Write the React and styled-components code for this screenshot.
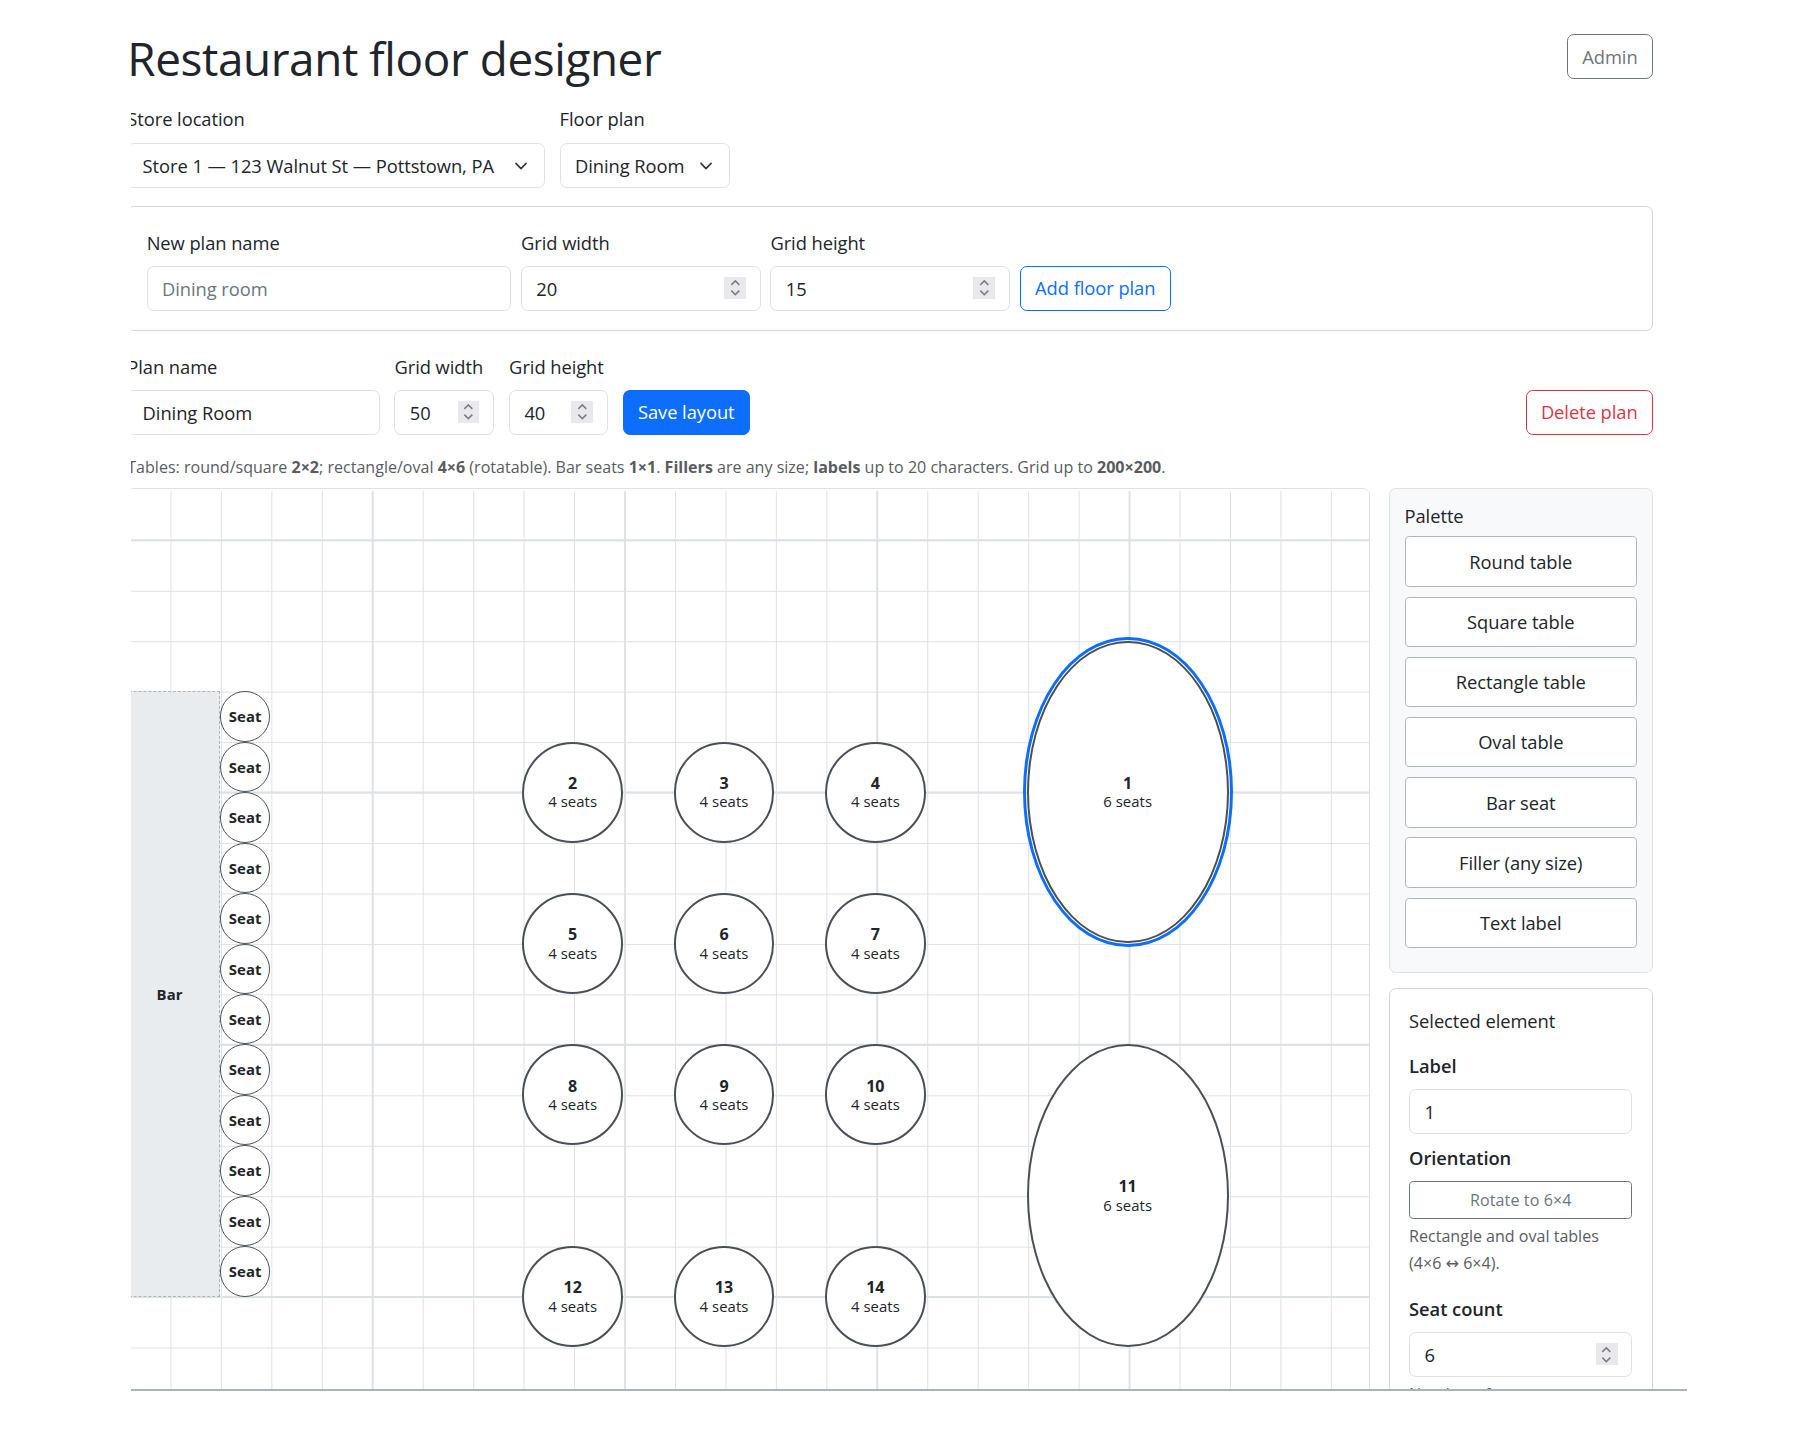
import React from 'react';
import styled, { createGlobalStyle } from 'styled-components';

const CELL = 44;

const GlobalStyle = createGlobalStyle`
  html, body {
    margin: 0;
    padding: 0;
    background: #fff;
  }
  body {
    font-family: "Open Sans", "Noto Sans", "Liberation Sans", sans-serif;
    font-size: 16px;
    line-height: 24px;
    color: #212529;
    letter-spacing: -0.05px;
  }
  * {
    box-sizing: border-box;
  }
`;

const Page = styled.div`
  zoom: 1.14668;
  width: 1568px;
  height: 1256px;
  padding-left: 114px;
  overflow: hidden;
`;

const Frame = styled.div`
  width: 1357px;
  height: 1213px;
  overflow: hidden;
  border-bottom: 2px solid #a9b5ba;
`;

const Inner = styled.div`
  width: 1330.5px;
  margin-left: -3px;
  padding-top: 30px;
`;

const Header = styled.div`
  display: flex;
  justify-content: space-between;
  align-items: flex-start;
`;

const Title = styled.h1`
  margin: -3px 0 0;
  font-size: 40px;
  line-height: 48px;
  font-weight: 400;
  letter-spacing: -0.35px;
`;

const Row = styled.div`
  display: flex;
  align-items: flex-end;
  gap: ${(p) => p.$gap || 13}px;
  margin-top: ${(p) => p.$top || 0}px;
`;

const Field = styled.div`
  width: ${(p) => p.$width}px;
  flex: none;
`;

const Label = styled.label`
  display: block;
  margin-bottom: ${(p) => p.$gap || 8}px;
`;

const Input = styled.input`
  display: block;
  width: 100%;
  height: 39px;
  padding: 0 12.5px;
  border: 1px solid #dee2e6;
  border-radius: 6px;
  background: #fff;
  color: #212529;
  font: inherit;
  letter-spacing: inherit;
  outline: none;

  &::placeholder {
    color: #6c757d;
    opacity: 1;
  }
`;

const Select = styled.select`
  display: block;
  width: 100%;
  height: 39px;
  padding: 0 36px 0 12.5px;
  border: 1px solid #dee2e6;
  border-radius: 6px;
  background: #fff url("data:image/svg+xml,%3csvg xmlns='http://www.w3.org/2000/svg' viewBox='0 0 16 16'%3e%3cpath fill='none' stroke='%23343a40' stroke-linecap='round' stroke-linejoin='round' stroke-width='2' d='m2 5 6 6 6-6'/%3e%3c/svg%3e") no-repeat right 12px center / 16px 12px;
  color: #212529;
  font: inherit;
  letter-spacing: inherit;
  appearance: none;
  outline: none;
`;

const NumberWrap = styled.div`
  position: relative;
`;

const Spinner = styled.span`
  position: absolute;
  top: 10px;
  right: 13px;
  width: 19px;
  height: 19px;
  background: #e9e9ed;
  display: flex;
  align-items: center;
  justify-content: center;
`;

const Button = styled.button`
  flex: none;
  height: 39px;
  padding: 0 12.5px;
  border: 1px solid ${(p) => p.$color};
  border-radius: 6px;
  background: ${(p) => (p.$solid ? p.$color : '#fff')};
  color: ${(p) => (p.$solid ? '#fff' : p.$color)};
  font: inherit;
  letter-spacing: inherit;
  white-space: nowrap;
`;

const NewPlanCard = styled.div`
  margin-top: 16px;
  height: 109px;
  padding: 19px 16px 0;
  border: 1px solid #d3d6d9;
  border-radius: 6px;
`;

const Push = styled.div`
  margin-left: auto;
`;

const Hint = styled.p`
  margin: 18px 0 0;
  font-size: 14px;
  line-height: 21px;
  letter-spacing: 0;
  color: #595c5f;

  strong {
    font-weight: 700;
  }
`;

const Workspace = styled.div`
  display: flex;
  align-items: flex-start;
  gap: 16.5px;
  margin-top: 8px;
`;

const Canvas = styled.div`
  position: relative;
  flex: none;
  width: 1083.5px;
  height: 800px;
  overflow: hidden;
  border: 1px solid #dee2e6;
  border-radius: 6px;
`;

const Plane = styled.div`
  position: absolute;
  left: -7px;
  top: 1px;
  width: 2200px;
  height: 1760px;
  background-color: #fff;
  background-image:
    linear-gradient(to right, #dee2e6 2px, transparent 2px),
    linear-gradient(to bottom, #dee2e6 2px, transparent 2px),
    linear-gradient(to right, #dee2e6 1px, transparent 1px),
    linear-gradient(to bottom, #dee2e6 1px, transparent 1px);
  background-size: 220px 220px, 220px 220px, 44px 44px, 44px 44px;
  background-position: -0.5px 0, 0 42px, 0 0, 0 -1px;
`;

const Piece = styled.div`
  position: absolute;
  left: ${(p) => p.$x * CELL - 1}px;
  top: ${(p) => p.$y * CELL - 1}px;
  width: ${(p) => p.$w * CELL}px;
  height: ${(p) => p.$h * CELL}px;
  display: flex;
  flex-direction: column;
  align-items: center;
  justify-content: center;
  font-size: 13px;
  line-height: 16px;
  letter-spacing: 0.05px;
`;

const Table = styled(Piece)`
  margin-left: -0.5px;
  border: 2px solid #495057;
  border-radius: 50%;
  background: #fff;
  outline: ${(p) => (p.$selected ? '3px solid #0d6efd' : 'none')};
  outline-offset: 1px;
`;

const TableNumber = styled.b`
  font-weight: 700;
  font-size: 14px;
`;

const Seat = styled(Piece)`
  border: 1px solid #495057;
  border-radius: 50%;
  background: #fff;
  font-weight: 700;
  letter-spacing: 0.1px;
  z-index: 1;
`;

const Bar = styled(Piece)`
  border: 1px dashed #adb5bd;
  background: #e9ecef;
  font-weight: 700;
`;

const Sidebar = styled.div`
  flex: none;
  width: 230.5px;
  display: flex;
  flex-direction: column;
  gap: 13px;
`;

const Palette = styled.div`
  height: 423px;
  padding: 11px 13px;
  border: 1px solid #dee2e6;
  border-radius: 6px;
  background: #f8f9fa;
`;

const PaletteList = styled.div`
  display: flex;
  flex-direction: column;
  gap: 8.5px;
  margin-top: 6px;
`;

const PaletteButton = styled.button`
  height: 44px;
  border: 1px solid #adb5bd;
  border-radius: 4px;
  background: #fff;
  color: #212529;
  font: inherit;
  letter-spacing: inherit;
`;

const Inspector = styled.div`
  padding: 15px 17px;
  border: 1px solid #d3d6d9;
  border-radius: 6px;
  background: #fff;
`;

const InspectorTitle = styled.div`
  margin-bottom: 16px;
`;

const InspectorLabel = styled.label`
  display: block;
  margin-bottom: 8px;
  font-weight: 600;
`;

const InspectorGroup = styled.div`
  margin-bottom: ${(p) => p.$gap}px;
`;

const RotateButton = styled.button`
  display: block;
  width: 100%;
  height: 33px;
  padding: 2px 0 0;
  border: 1px solid #6c757d;
  border-radius: 4px;
  background: #fff;
  color: #6c757d;
  font: inherit;
  font-size: 14px;
  letter-spacing: 0.1px;
`;

const Help = styled.div`
  margin-top: 4px;
  font-size: 14px;
  line-height: 23px;
  letter-spacing: 0;
  color: #595c5f;
`;

const Arrow = styled.span`
  font-family: "DejaVu Sans", sans-serif;
`;

const rounds = [
  [2, 8, 5], [3, 11, 5], [4, 14, 5],
  [5, 8, 8], [6, 11, 8], [7, 14, 8],
  [8, 8, 11], [9, 11, 11], [10, 14, 11],
  [12, 8, 15], [13, 11, 15], [14, 14, 15],
];

const seatRows = [4, 5, 6, 7, 8, 9, 10, 11, 12, 13, 14, 15];

const paletteItems = ['Round table', 'Square table', 'Rectangle table', 'Oval table', 'Bar seat', 'Filler (any size)', 'Text label'];

function Stepper({ value }) {
  return (
    <NumberWrap>
      <Input defaultValue={value} />
      <Spinner>
        <svg width="11" height="17" viewBox="0 0 11 17" fill="none" stroke="#7c7c82" strokeWidth="1.3">
          <path d="M2 6l3.5-3.5L9 6" />
          <path d="M2 11l3.5 3.5L9 11" />
        </svg>
      </Spinner>
    </NumberWrap>
  );
}

export default function App() {
  return (
    <Page>
      <GlobalStyle />
      <Frame>
        <Inner>
          <Header>
            <Title>Restaurant floor designer</Title>
            <Button $color="#6c757d">Admin</Button>
          </Header>

          <Row $top={17}>
            <Field $width={364}>
              <Label $gap={9}>Store location</Label>
              <Select defaultValue="1">
                <option value="1">Store 1 — 123 Walnut St — Pottstown, PA</option>
              </Select>
            </Field>
            <Field $width={149}>
              <Label $gap={9}>Floor plan</Label>
              <Select defaultValue="d">
                <option value="d">Dining Room</option>
              </Select>
            </Field>
          </Row>

          <NewPlanCard>
            <Row $gap={8.5}>
              <Field $width={318}>
                <Label>New plan name</Label>
                <Input placeholder="Dining room" />
              </Field>
              <Field $width={209}>
                <Label>Grid width</Label>
                <Stepper value="20" />
              </Field>
              <Field $width={209}>
                <Label>Grid height</Label>
                <Stepper value="15" />
              </Field>
              <Button $color="#0d6efd">Add floor plan</Button>
            </Row>
          </NewPlanCard>

          <Row $top={19}>
            <Field $width={220}>
              <Label>Plan name</Label>
              <Input defaultValue="Dining Room" />
            </Field>
            <Field $width={87}>
              <Label>Grid width</Label>
              <Stepper value="50" />
            </Field>
            <Field $width={86}>
              <Label>Grid height</Label>
              <Stepper value="40" />
            </Field>
            <Button $color="#0d6efd" $solid>Save layout</Button>
            <Push>
              <Button $color="#dc3545">Delete plan</Button>
            </Push>
          </Row>

          <Hint>
            Tables: round/square <strong>2×2</strong>; rectangle/oval <strong>4×6</strong> (rotatable). Bar seats{' '}
            <strong>1×1</strong>. <strong>Fillers</strong> are any size; <strong>labels</strong> up to 20 characters. Grid up to{' '}
            <strong>200×200</strong>.
          </Hint>

          <Workspace>
            <Canvas>
              <Plane>
                <Bar $x={0} $y={4} $w={2} $h={12}>Bar</Bar>
                {seatRows.map((row) => (
                  <Seat key={row} $x={2} $y={row} $w={1} $h={1}>Seat</Seat>
                ))}
                {rounds.map(([id, x, y]) => (
                  <Table key={id} $x={x} $y={y} $w={2} $h={2}>
                    <TableNumber>{id}</TableNumber>
                    <span>4 seats</span>
                  </Table>
                ))}
                <Table $x={18} $y={3} $w={4} $h={6} $selected>
                  <TableNumber>1</TableNumber>
                  <span>6 seats</span>
                </Table>
                <Table $x={18} $y={11} $w={4} $h={6}>
                  <TableNumber>11</TableNumber>
                  <span>6 seats</span>
                </Table>
              </Plane>
            </Canvas>

            <Sidebar>
              <Palette>
                Palette
                <PaletteList>
                  {paletteItems.map((item) => (
                    <PaletteButton key={item}>{item}</PaletteButton>
                  ))}
                </PaletteList>
              </Palette>

              <Inspector>
                <InspectorTitle>Selected element</InspectorTitle>
                <InspectorGroup $gap={9}>
                  <InspectorLabel>Label</InspectorLabel>
                  <Input defaultValue="1" />
                </InspectorGroup>
                <InspectorGroup $gap={16}>
                  <InspectorLabel>Orientation</InspectorLabel>
                  <RotateButton>Rotate to 6×4</RotateButton>
                  <Help>
                    Rectangle and oval tables
                    <br />
                    (4×6 <Arrow>↔</Arrow> 6×4).
                  </Help>
                </InspectorGroup>
                <InspectorGroup $gap={4}>
                  <InspectorLabel>Seat count</InspectorLabel>
                  <Stepper value="6" />
                  <Help>Number of seats</Help>
                </InspectorGroup>
              </Inspector>
            </Sidebar>
          </Workspace>
        </Inner>
      </Frame>
    </Page>
  );
}
